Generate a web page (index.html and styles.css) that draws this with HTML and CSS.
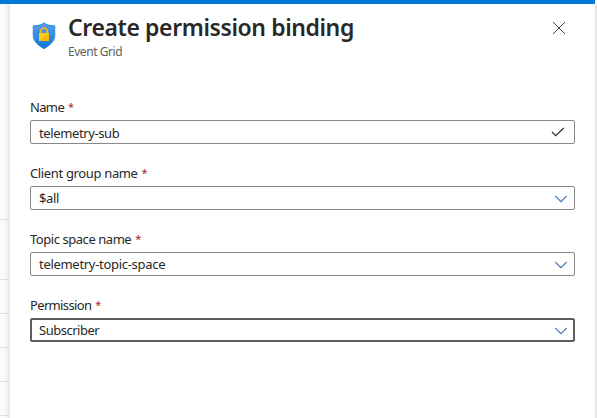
FILE: index.html
```html
<!DOCTYPE html>
<html lang="en">
<head>
<meta charset="utf-8">
<title>Create permission binding</title>
<link rel="stylesheet" href="styles.css">
</head>
<body>
<div class="topbar"></div>
<div class="workspace">
  <div class="backdrop">
    <div class="row row-head"></div>
    <div class="row row-first"></div>
    <div class="row"></div>
    <div class="row"></div>
    <div class="row"></div>
    <div class="row"></div>
  </div>
  <main class="panel">
    <header class="header">
      <svg class="shield" viewBox="0 0 24 28" aria-hidden="true">
        <defs>
          <linearGradient id="blue" x1="0" y1="0" x2="0" y2="1"><stop offset="0" stop-color="#5a9cec"/><stop offset=".45" stop-color="#3c8ce2"/><stop offset="1" stop-color="#0878d4"/></linearGradient>
          <linearGradient id="gold" x1="0" y1="0" x2="1" y2="1"><stop offset=".5" stop-color="#ffce12"/><stop offset=".52" stop-color="#f9b808"/></linearGradient>
        </defs>
        <path d="M12 .8C9.500 3.200 5.500 3.600 1.200 3.800v9.600c0 6.300 6 10.400 10.800 13.300 4.800-2.900 10.800-7 10.800-13.300V3.800C18.500 3.600 14.500 3.200 12 .8z" fill="url(#blue)" stroke="#0878d4" stroke-width=".7"/>
        <path d="M8.700 12V9.500a3.300 3.300 0 0 1 6.600 0V12" fill="none" stroke="#f9b808" stroke-width="1.700"/>
        <rect x="7" y="11" width="10" height="8" rx=".6" fill="url(#gold)"/>
      </svg>
      <div class="heading">
        <h1 class="title">Create permission binding</h1>
        <div class="subtitle">Event Grid</div>
      </div>
      <svg class="close" viewBox="0 0 14 14" aria-hidden="true"><path d="M1 1l12 12M13 1L1 13"/></svg>
    </header>
    <form class="form">
      <div class="field">
        <div class="label"><span class="label-name">Name</span><span class="required">*</span></div>
        <div class="control control-text"><span>telemetry-sub</span><svg class="check" viewBox="0 0 14 10" aria-hidden="true"><path d="M1 5l3.700 3.700L12.800 1"/></svg></div>
      </div>
      <div class="field">
        <div class="label"><span>Client group name</span><span class="required">*</span></div>
        <div class="control"><span>$all</span><svg class="chevron" viewBox="0 0 14 8" aria-hidden="true"><path d="M1.300 1L7 6.700 12.700 1"/></svg></div>
      </div>
      <div class="field">
        <div class="label"><span class="label-topic">Topic space name</span><span class="required">*</span></div>
        <div class="control"><span class="value-space">telemetry-topic-space</span><svg class="chevron" viewBox="0 0 14 8" aria-hidden="true"><path d="M1.300 1L7 6.700 12.700 1"/></svg></div>
      </div>
      <div class="field">
        <div class="label"><span class="label-permission">Permission</span><span class="required">*</span></div>
        <div class="control control-focus"><span class="value-subscriber">Subscriber</span><svg class="chevron" viewBox="0 0 14 8" aria-hidden="true"><path d="M1.300 1L7 6.700 12.700 1"/></svg></div>
      </div>
    </form>
  </main>
  <div class="edge"></div>
</div>
</body>
</html>
```

FILE: styles.css
```css
* { box-sizing: border-box; }
body {
  margin: 0;
  height: 418px;
  overflow: hidden;
  background: #fff;
  color: #292827;
  font-family: "Noto Sans", "Open Sans", sans-serif;
  font-size: 13px;
}
.topbar { width: 595px; height: 4px; background: #0078d4; }
.workspace { display: flex; height: 414px; }
.backdrop {
  width: 10px;
  background: linear-gradient(to right, #fcfcfc 0, #f9f9f9 50%, #e6e6e6 100%);
}
.row { height: 34px; border-bottom: 1px solid #dfdfdf; }
.row-head { height: 216px; }
.row-first { height: 60px; }
.panel { width: 585px; padding: 12px 20px 0; background: #fff; }
.edge { width: 2px; background: #ededed; border-left: 1px solid #e2e2e2; }
.header { display: flex; height: 82px; }
.shield { width: 24px; height: 28px; margin: 6px 0 0 2px; }
.heading { flex: 1; margin-left: 12px; white-space: nowrap; }
.title {
  margin: 0;
  font-size: 23px;
  line-height: 23px;
  font-weight: 600;
  letter-spacing: -0.4px;
}
.subtitle { margin-top: 4px; font-size: 12px; line-height: 18px; letter-spacing: -0.45px; color: #605e5c; }
.close { width: 14px; height: 14px; margin: 5px 9px 0 0; }
.close path { fill: none; stroke: #484644; stroke-width: 1; }
.field { height: 66px; }
.label { display: flex; gap: 4px; height: 22px; line-height: 18px; letter-spacing: -0.35px; white-space: nowrap; }
.label-name { letter-spacing: -0.65px; }
.label-topic { letter-spacing: -0.45px; }
.label-permission { letter-spacing: -0.65px; }
.required { color: #a4262c; font-size: 11px; }
.control {
  display: flex;
  align-items: center;
  justify-content: space-between;
  height: 24px;
  padding: 0 6px 0 8px;
  border: 1px solid #8a8886;
  border-radius: 2px;
  line-height: 20px;
  letter-spacing: -0.38px;
  white-space: nowrap;
}
.value-space { letter-spacing: -0.3px; }
.value-subscriber { letter-spacing: -0.48px; }
.control-text { padding-right: 9px; }
.control-text span { position: relative; top: 1px; }
.control-focus { border: 2px solid #605e5c; padding: 0 5px 0 7px; }
.check { width: 14px; height: 10px; }
.check path { fill: none; stroke: #323130; stroke-width: 1.3; }
.chevron { width: 14px; height: 8px; margin-top: 2px; }
.chevron path { fill: none; stroke: #4a78b4; stroke-width: 1.1; }
```
